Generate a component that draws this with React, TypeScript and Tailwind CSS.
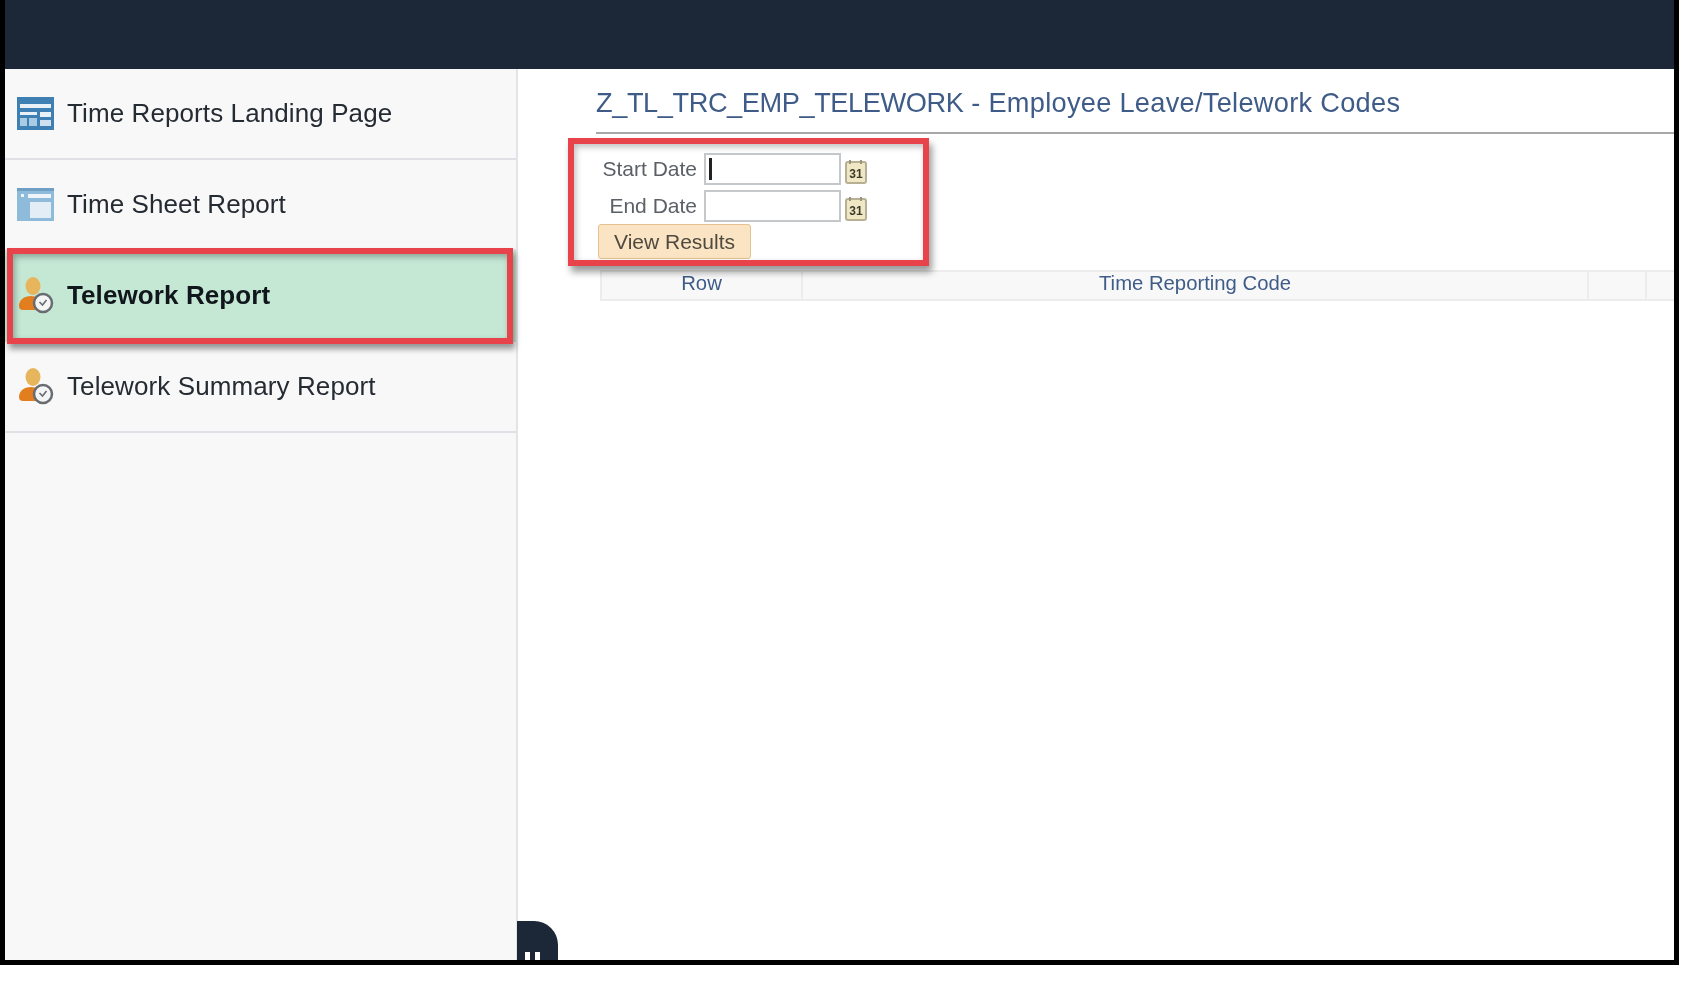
const CalendarIcon = () => (
  <svg width="23" height="25" viewBox="0 0 23 25" className="shrink-0">
    <rect x="1" y="3" width="20" height="21" rx="2" fill="#f0e8c4" stroke="#b8b094" strokeWidth="2" />
    <path d="M5 1v4M16 1v4" stroke="#9a947c" strokeWidth="2" />
    <text x="11" y="19" textAnchor="middle" fontSize="12" fontWeight="700" fill="#3d3a2c">
      31
    </text>
  </svg>
);

const GridIcon = () => (
  <svg width="37" height="33" viewBox="0 0 37 33" className="shrink-0">
    <rect width="37" height="33" fill="#3f80b4" />
    <rect x="3" y="7" width="31" height="4" fill="#e8f1f8" />
    <rect x="3" y="15" width="17" height="3" fill="#e8f1f8" />
    <rect x="3" y="21" width="7" height="8" fill="#a9cbe3" />
    <rect x="12" y="21" width="8" height="8" fill="#a9cbe3" />
    <rect x="23" y="15" width="11" height="5" fill="#e8f1f8" />
    <rect x="23" y="23" width="11" height="6" fill="#cfe1ef" />
  </svg>
);

const SheetIcon = () => (
  <svg width="37" height="33" viewBox="0 0 37 33" className="shrink-0">
    <rect width="37" height="33" fill="#8fbbdb" />
    <rect width="37" height="3" fill="#6f9fc4" />
    <rect x="11" y="6" width="23" height="4" fill="#eef5fa" />
    <rect x="13" y="14" width="21" height="16" fill="#e3edf5" />
    <rect x="4" y="6" width="3" height="3" fill="#eef5fa" />
  </svg>
);

const PersonClockIcon = () => (
  <svg width="37" height="37" viewBox="0 0 37 37" className="shrink-0">
    <ellipse cx="16" cy="9" rx="7.5" ry="9" fill="#e6b55c" />
    <path d="M2 29c0-6 5-10 12-10 6 0 9 3 9 8v3c0 2-2 3-4 3H6c-2 0-4-1-4-4z" fill="#e37e1e" />
    <circle cx="26" cy="26" r="9" fill="#f4f5f5" stroke="#686b6f" strokeWidth="2.5" />
    <path d="M22.5 25l3 3 4-5" fill="none" stroke="#686b6f" strokeWidth="1.6" />
  </svg>
);

const navItems = [
  { label: "Time Reports Landing Page", icon: GridIcon },
  { label: "Time Sheet Report", icon: SheetIcon },
  { label: "Telework Report", icon: PersonClockIcon, active: true },
  { label: "Telework Summary Report", icon: PersonClockIcon },
];

const dateFields = [
  { label: "Start Date", focused: true },
  { label: "End Date", focused: false },
];

export default function App() {
  return (
    <div className="h-[993px] w-[1692px] bg-white font-['Liberation_Sans',Arial,sans-serif]">
      <div className="flex h-[965px] w-[1679px] flex-col overflow-hidden border-r-[5px] border-b-[5px] border-l-[5px] border-black blur-[0.6px]">
        {/* Top bar */}
        <div className="h-[69px] shrink-0 bg-[#1c2737] shadow-[0_1px_1px_#8a9096]" />

        <div className="relative flex min-h-0 flex-1">
          {/* Sidebar */}
          <aside className="w-[513px] shrink-0 border-r-2 border-[#e3e4e8] bg-[#f8f8f8]">
            {navItems.map((item) => (
              <div
                key={item.label}
                className={`relative flex h-[91px] items-center gap-[13px] border-b-2 pl-[12px] ${
                  item.active ? "border-transparent bg-[#c5e8d5]" : "border-[#e0e0e6]"
                }`}
              >
                <item.icon />
                <span
                  className={`pb-[2px] text-[26px] leading-none tracking-[0.1px] text-[#252b33] ${
                    item.active ? "font-bold text-[#10161c]" : ""
                  }`}
                >
                  {item.label}
                </span>
                {item.active && (
                  <div className="absolute top-[-3px] right-[3px] bottom-[-4px] left-[2px] border-[6px] border-[#e8434b] shadow-[2px_5px_6px_rgba(0,0,0,0.4),inset_2px_3px_6px_rgba(0,0,0,0.3)]" />
                )}
              </div>
            ))}
          </aside>

          {/* Main */}
          <main className="min-w-0 flex-1 bg-white">
            <div className="ml-[78px]">
              <h1 className="h-[65px] border-b-2 border-[#a8a8a8] pt-[16px] text-[27.2px] leading-[36px] font-normal text-[#3f5c88]">
                <span className="tracking-[-0.42px]">Z_TL_TRC_EMP_TELEWORK</span>
                <span className="tracking-[0.29px]"> - Employee Leave/Telework Codes</span>
              </h1>
            </div>

            <div className="relative mt-[19px] ml-[80px] flex flex-col gap-[5px]">
              {dateFields.map((field) => (
                <div key={field.label} className="flex items-center">
                  <span className="w-[106px] pr-[7px] pb-[2px] text-right text-[21px] leading-none whitespace-nowrap text-[#5b6066]">
                    {field.label}
                  </span>
                  <div className="flex h-[32px] w-[137px] items-center border-2 border-[#c4c8cb] bg-white pl-[3px]">
                    {field.focused && <div className="h-[22px] w-[3px] bg-[#222]" />}
                  </div>
                  <div className="ml-[4px] pt-[4px]">
                    <CalendarIcon />
                  </div>
                </div>
              ))}
              <button className="mt-[-3px] h-[35px] w-[153px] rounded-[3px] border border-[#e3c190] bg-[#fbe4c3] text-[21px] leading-none text-[#4e4a40]">
                View Results
              </button>
              <div className="absolute top-[-15px] left-[-30px] h-[128px] w-[361px] border-[6px] border-[#e8434b] shadow-[3px_6px_7px_rgba(0,0,0,0.4),inset_2px_3px_6px_rgba(0,0,0,0.25)]" />
            </div>

            {/* Results table header */}
            <div className="mt-[11px] ml-[82px] flex h-[31px] border-y-2 border-[#ececec] bg-[#f8f8f8] text-[20.3px] leading-none text-[#3f5c88]">
              <div className="flex w-[203px] items-center justify-center border-x-2 border-[#ececec] pb-[4px]">Row</div>
              <div className="flex w-[786px] items-center justify-center border-r-2 border-[#ececec] pb-[4px]">
                Time Reporting Code
              </div>
              <div className="w-[58px] border-r-2 border-[#ececec]" />
            </div>
          </main>

          {/* Collapse handle */}
          <div className="absolute bottom-0 left-[512px] flex h-[39px] w-[41px] items-end justify-center gap-[5px] rounded-tr-[24px] bg-[#1c2737] pr-[10px]">
            <div className="h-[8px] w-[5px] bg-white" />
            <div className="h-[8px] w-[5px] bg-white" />
          </div>
        </div>
      </div>
    </div>
  );
}
